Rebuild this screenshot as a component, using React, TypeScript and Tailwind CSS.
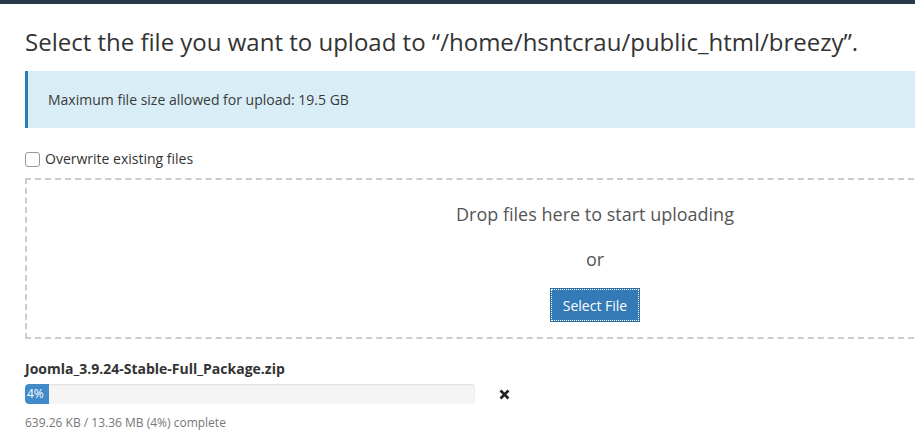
import React from "react";

export default function App() {
  return (
    <div className="w-[915px] h-[436px] overflow-hidden bg-white text-[#333]" style={{ fontFamily: '"Open Sans", sans-serif' }}>
      <div className="h-[4px] bg-[#293a4a]" />
      <div className="pl-[25px] w-[1165px]">
        <h1 className="mt-[22px] text-[24px] leading-[32px] font-normal text-[#333]">
          Select the file you want to upload to “/home/hsntcrau/public_html/breezy”.
        </h1>
        <div className="mt-[13px] h-[57px] border-l-[3px] border-[#2f7bb4] bg-[#d9edf7] pl-[20px] flex items-center">
          <span className="text-[14px] text-[#3a3a3a]">Maximum file size allowed for upload: 19.5 GB</span>
        </div>
        <label className="mt-[20px] flex items-center gap-[5px] h-[20px]">
          <span className="mt-[3px] w-[15px] h-[15px] rounded-[3px] border border-[#999] bg-white" />
          <span className="text-[14px] text-[#333]">Overwrite existing files</span>
        </label>
        <div className="mt-[10px] h-[161px] border-2 border-dashed border-[#ccc] flex flex-col items-center">
          <div className="mt-[22px] text-[18px] leading-[24px] text-[#555]">Drop files here to start uploading</div>
          <div className="mt-[21px] text-[18px] leading-[24px] text-[#555]">or</div>
          <button className="mt-[17px] w-[90px] h-[34px] bg-[#337ab7] border border-[#2e6da4] outline-1 outline-dotted outline-white -outline-offset-2 text-white text-[14px]">
            Select File
          </button>
        </div>
        <div className="mt-[20px] text-[14px] font-bold leading-[20px] text-[#333]">Joomla_3.9.24-Stable-Full_Package.zip</div>
        <div className="mt-[5px] flex items-center">
          <div className="w-[450px] h-[20px] rounded-[4px] bg-[#f5f5f5] overflow-hidden shadow-[inset_0_1px_2px_rgba(0,0,0,0.1)]">
            <div className="h-full bg-[#428bca] text-white text-[12px] leading-[20px] pl-[2px] rounded-l-[4px]" style={{ width: "24px" }}>4%</div>
          </div>
          <svg className="ml-[24px]" width="11" height="11" viewBox="0 0 11 11">
            <path d="M1.5 1.5 L9.5 9.5 M9.5 1.5 L1.5 9.5" stroke="#222" strokeWidth="2.6" strokeLinecap="butt" />
          </svg>
        </div>
        <div className="mt-[10px] text-[12px] leading-[18px] text-[#777]">639.26 KB / 13.36 MB (4%) complete</div>
      </div>
    </div>
  );
}
